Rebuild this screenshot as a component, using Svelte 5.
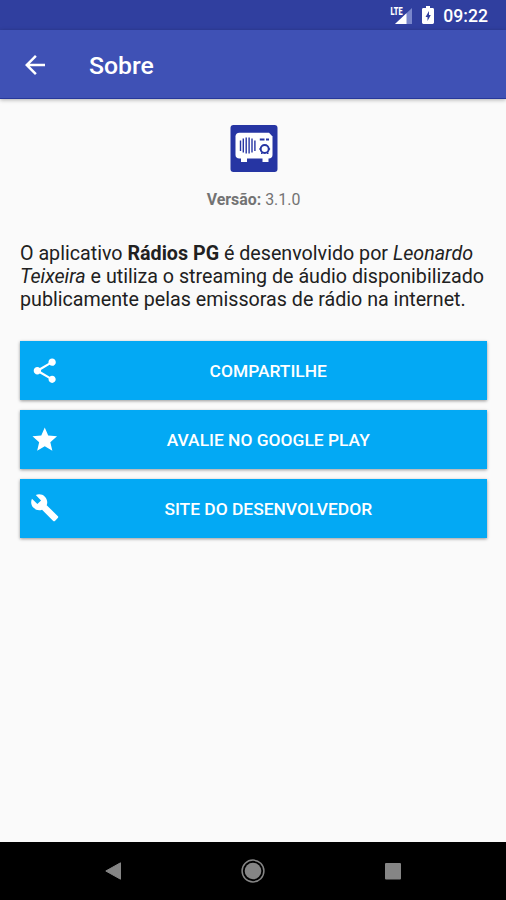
<script lang="ts">
  const version = "3.1.0";

  const actions = [
    {
      label: "Compartilhe",
      icon: "M18 16.08c-.76 0-1.44.3-1.96.77L8.91 12.7c.05-.23.09-.46.09-.7s-.04-.47-.09-.7l7.05-4.11c.54.5 1.25.81 2.04.81 1.66 0 3-1.34 3-3s-1.34-3-3-3-3 1.34-3 3c0 .24.04.47.09.7L8.04 9.81C7.5 9.31 6.79 9 6 9c-1.66 0-3 1.34-3 3s1.34 3 3 3c.79 0 1.5-.31 2.04-.81l7.12 4.16c-.05.21-.08.43-.08.65 0 1.61 1.31 2.92 2.92 2.92s2.92-1.31 2.92-2.92-1.31-2.92-2.92-2.92z",
    },
    {
      label: "Avalie no Google Play",
      icon: "M12 17.27L18.18 21l-1.64-7.03L22 9.24l-7.19-.61L12 2 9.19 8.63 2 9.24l5.46 4.73L5.82 21z",
    },
    {
      label: "Site do desenvolvedor",
      icon: "M22.7 19l-9.1-9.1c.9-2.3.4-5-1.5-6.9-2-2-5-2.4-7.4-1.3L9 6 6 9 1.6 4.7C.4 7.1.9 10.1 2.9 12.1c1.9 1.9 4.6 2.4 6.9 1.5l9.1 9.1c.4.4 1 .4 1.4 0l2.3-2.3c.5-.4.5-1.1.1-1.4z",
    },
  ];
</script>

<div class="screen">
  <div class="status-bar">
    <svg class="signal" width="23" height="19" viewBox="0 0 23 19">
      <path d="M22 2v16H5z" fill="#7986cb" />
      <path d="M16.500 7.200V18H5z" fill="#fff" />
      <path d="M0 0h13v8l-2 2H0z" fill="#303f9f" />
      <text x="0.5" y="8.5" textLength="12" lengthAdjust="spacingAndGlyphs">LTE</text>
    </svg>
    <svg class="battery" width="12" height="18" viewBox="0 0 12 18">
      <path d="M4 0h4v2h2.6c.8 0 1.4.6 1.4 1.4v13.2c0 .8-.6 1.4-1.4 1.4H1.4C.6 18 0 17.4 0 16.6V3.4C0 2.6.6 2 1.4 2H4z" fill="#fff" />
      <path d="M7 5L3.500 11h2v4L8.800 9H7z" fill="#303f9f" />
    </svg>
    <span class="clock">09:22</span>
  </div>

  <header>
    <button class="back" aria-label="Voltar">
      <svg width="30" height="30" viewBox="0 0 24 24">
        <path d="M20 11H7.83l5.59-5.59L12 4l-8 8 8 8 1.41-1.41L7.83 13H20v-2z" fill="#fff" />
      </svg>
    </button>
    <h1>Sobre</h1>
  </header>

  <main>
    <svg class="logo" width="48" height="48" viewBox="0 0 48 48">
      <rect x="0.5" y="1" width="47" height="47" rx="3" fill="#2635a3" />
      <path d="M11 34h6v4h-6zM32.500 34h6v4h-6z" fill="#fff" />
      <path d="M9.500 8.700h29.500l3.500 3.800v18.500c0 2-1.500 3.500-3.500 3.500h-29.500c-2.500 0-4-1.500-4-3.500V12.500c0-2.500 1.500-3.800 4-3.800z" fill="#fff" />
      <g fill="#2635a3">
        <rect x="9.800" y="16.500" width="1.400" height="10.500" />
        <rect x="12.600" y="14.500" width="1.400" height="14" />
        <rect x="15.500" y="13.500" width="1.400" height="16" />
        <rect x="18.400" y="13.500" width="1.400" height="16" />
        <rect x="21.300" y="14.500" width="1.400" height="14" />
        <rect x="24.200" y="16.500" width="1.400" height="10.500" />
        <rect x="29.800" y="14.500" width="4.700" height="2" />
        <rect x="36" y="14.500" width="3" height="2" />
      </g>
      <circle cx="34.700" cy="25" r="4" fill="none" stroke="#2635a3" stroke-width="1.900" />
      <path d="M29.300 24.300h1.500v1.500h-1.500zM38.600 24.300h1.500v1.500h-1.500zM31 28.500h1.500V30H31zM37 28.500h1.500V30H37z" fill="#2635a3" />
    </svg>
    <p class="version"><b>Versão:</b> {version}</p>

    <p class="about">
      O aplicativo <b>Rádios PG</b> é desenvolvido por <i>Leonardo<br />Teixeira</i> e utiliza o
      streaming de áudio disponibilizado<br />publicamente pelas emissoras de rádio na internet.
    </p>

    <div class="actions">
      {#each actions as action}
        <button class="action">
          <svg width="29.500" height="29.500" viewBox="0 0 24 24">
            <path d={action.icon} fill="#fff" />
          </svg>
          <span>{action.label}</span>
        </button>
      {/each}
    </div>
  </main>

  <nav>
    <svg width="16" height="18" viewBox="0 0 16 18">
      <path d="M15.500 .8v16.400L.8 9z" fill="#858585" stroke="#858585" stroke-linejoin="round" />
    </svg>
    <svg width="24" height="24" viewBox="0 0 24 24">
      <circle cx="12" cy="12" r="8.300" fill="#858585" />
      <circle cx="12" cy="12" r="10.900" fill="none" stroke="#858585" stroke-width="1.500" />
    </svg>
    <svg width="16" height="17" viewBox="0 0 16 17">
      <rect width="16" height="16.500" rx="1" fill="#858585" />
    </svg>
  </nav>
</div>

<style>
  :global(body) {
    margin: 0;
  }

  .screen {
    display: flex;
    flex-direction: column;
    width: 506px;
    height: 900px;
    overflow: hidden;
    background: #fafafa;
    font-family: Roboto, "Liberation Sans", sans-serif;
  }

  .status-bar {
    display: flex;
    flex: none;
    align-items: center;
    justify-content: flex-end;
    box-sizing: border-box;
    height: 30px;
    padding-right: 18px;
    background: #303f9f;
    color: #fff;
  }

  .signal {
    margin-right: 9px;
  }

  .signal text {
    fill: #fff;
    font-size: 10px;
    font-weight: 900;
  }

  .battery {
    margin-right: 9px;
  }

  .clock {
    padding-top: 2px;
    font-size: 17.6px;
    font-weight: 500;
  }

  header {
    display: flex;
    flex: none;
    align-items: center;
    box-sizing: border-box;
    height: 69px;
    padding: 1px 20px 0;
    border-bottom: 1px solid #27389a;
    background: #3f51b5;
    box-shadow: 0 1px 4px rgba(0, 0, 0, 0.3);
    color: #fff;
  }

  button {
    border: 0;
    padding: 0;
    font-family: inherit;
    color: #fff;
  }

  .back {
    display: flex;
    background: none;
  }

  h1 {
    margin: 2px 0 0 39px;
    font-size: 24.8px;
    font-weight: 500;
  }

  main {
    display: flex;
    flex: 1;
    flex-direction: column;
    padding: 25px 19px 0 20px;
  }

  .logo {
    align-self: center;
  }

  .version {
    margin: 18px 0 0;
    font-size: 15.9px;
    line-height: 20px;
    text-align: center;
    color: #737373;
  }

  .about {
    margin: 32px 0 0;
    font-size: 19.68px;
    line-height: 23px;
    white-space: nowrap;
    color: #212121;
  }

  .actions {
    display: flex;
    flex-direction: column;
    gap: 10px;
    margin-top: 30px;
  }

  .action {
    display: flex;
    align-items: center;
    height: 58.9px;
    padding: 0 10px;
    background: #03a9f4;
    box-shadow: 0 1px 3px rgba(0, 0, 0, 0.4);
  }

  .action span {
    flex: 1;
    padding-top: 1px;
    font-size: 17.4px;
    font-weight: 500;
    text-transform: uppercase;
  }

  nav {
    display: flex;
    flex: none;
    align-items: center;
    justify-content: space-between;
    box-sizing: border-box;
    height: 58px;
    padding: 0 105px;
    background: #000;
  }
</style>
